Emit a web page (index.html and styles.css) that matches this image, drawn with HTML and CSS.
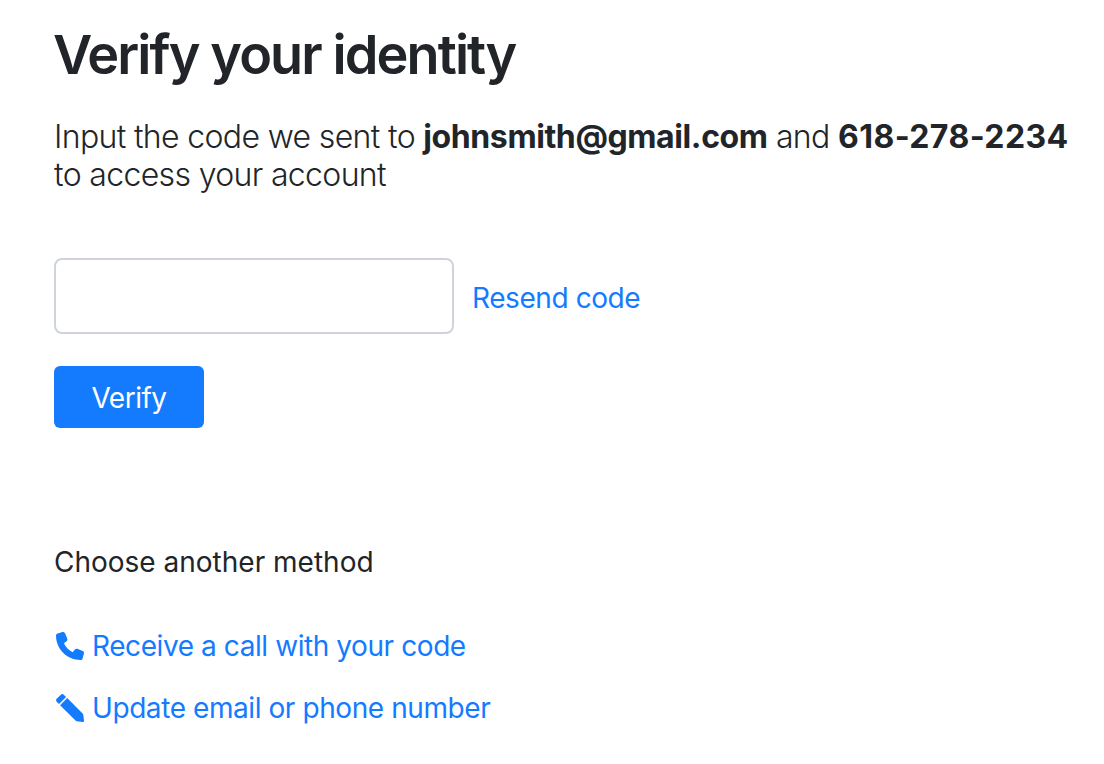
FILE: index.html
```html
<!DOCTYPE html>
<html lang="en">
  <head>
    <meta charset="UTF-8" />
    <meta name="viewport" content="width=device-width, initial-scale=1.0" />
    <title>Verify your identity</title>
    <link rel="stylesheet" href="styles.css">
  </head>
  <body>
    <div class="container">
      <h1>Verify your identity</h1>
      <p class="lead">
        Input the code we sent to <strong class="email">johnsmith@gmail.com</strong> and <strong class="phone">618-278-2234</strong><br />
        to access your account
      </p>

      <form class="verify-form">
        <div class="code-row">
          <input type="text" class="code-input" aria-label="Code" />
          <a href="#" class="link resend">Resend code</a>
        </div>
        <button type="button" class="button">Verify</button>
      </form>

      <p class="other-title">Choose another method</p>
      <div class="methods">
        <a href="#" class="link method">
          <svg class="icon" viewBox="0 0 512 512">
            <path d="M164.9 24.6c-7.7-18.6-28-28.5-47.4-23.2l-88 24C12.1 30.2 0 46 0 64C0 311.4 200.6 512 448 512c18 0 33.8-12.1 38.6-29.5l24-88c5.3-19.4-4.6-39.7-23.2-47.4l-96-40c-16.3-6.8-35.2-2.1-46.3 11.6L304.7 368C234.3 334.7 177.3 277.7 144 207.3L193.3 167c13.7-11.2 18.4-30 11.6-46.3l-40-96z" />
          </svg>
          <span>Receive a call with your code</span>
        </a>
        <a href="#" class="link method">
          <svg class="icon" viewBox="0 0 28 28">
            <path d="M.9 4.6 4.6.9Q6.3-.8 8 .9L10.1 3 3 10.1.9 8Q-.8 6.3.9 4.6Z" />
            <path d="M11.2 4.1 26.6 19.5Q27.2 20.1 27.3 20.9L28 26.8Q28.1 28.1 26.8 28L20.9 27.3Q20.1 27.2 19.5 26.6L4.1 11.2Z" />
          </svg>
          <span>Update email or phone number</span>
        </a>
      </div>
    </div>
  </body>
</html>
```

FILE: styles.css
```css
body {
  font-family: "Inter", "Liberation Sans", sans-serif;
  margin: 0;
  background-color: #ffffff;
  color: #212529;
  font-size: 28px;
  line-height: 42px;
}

.container {
  padding: 21px 0 0 54px;
}

h1 {
  margin: 0 0 0 -1px;
  font-size: 54px;
  font-weight: 600;
  line-height: 68px;
  letter-spacing: -1.9px;
}

.lead {
  margin: 29px 0 0;
  font-size: 32px;
  font-weight: 300;
  line-height: 38.4px;
  letter-spacing: -0.65px;
  white-space: nowrap;
}

.lead strong {
  font-weight: 700;
}

.lead .email {
  letter-spacing: -0.4px;
}

.lead .phone {
  letter-spacing: 0.4px;
}

.verify-form {
  margin-top: 63.2px;
}

.code-row {
  display: flex;
  align-items: center;
  gap: 18px;
}

.code-input {
  box-sizing: border-box;
  width: 400px;
  height: 76px;
  padding: 12px 24px;
  border: 2px solid #ced4da;
  border-radius: 8px;
  font: inherit;
  outline: none;
}

.link {
  color: #147bff;
  letter-spacing: -0.42px;
  text-decoration: none;
}

.resend {
  padding-top: 4px;
}

.button {
  display: block;
  width: 150px;
  height: 62px;
  margin-top: 32px;
  padding: 2px 0 0;
  border: none;
  border-radius: 6px;
  background-color: #147bff;
  color: white;
  font: inherit;
  letter-spacing: -0.5px;
  cursor: pointer;
}

.other-title {
  margin: 113px 0 0;
}

.methods {
  display: flex;
  flex-direction: column;
  gap: 20px;
  margin-top: 42px;
}

.method {
  display: flex;
  align-items: center;
  gap: 8px;
  padding-left: 2px;
}

.icon {
  width: 28px;
  height: 28px;
  fill: currentColor;
}
```
